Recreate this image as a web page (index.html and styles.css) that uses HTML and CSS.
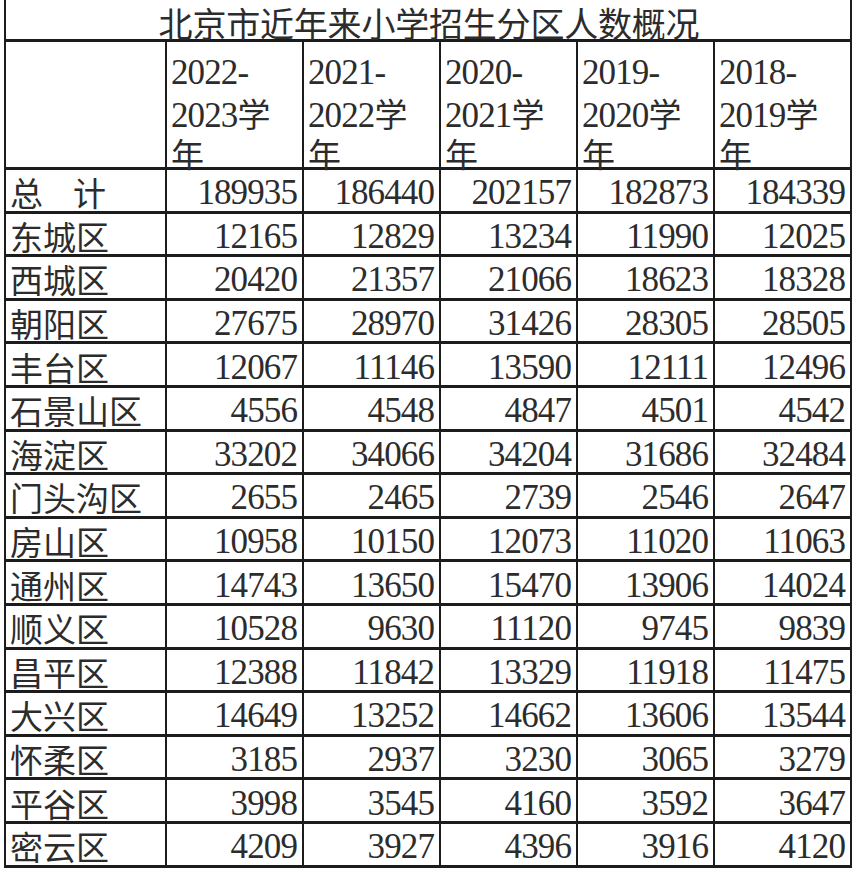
FILE: index.html
```html
<!DOCTYPE html>
<html>
<head>
<meta charset="utf-8">
<title>北京市近年来小学招生分区人数概况</title>
<link rel="stylesheet" href="styles.css">
</head>
<body>
<div class="sheet">
  <div class="title">北京市近年来小学招生分区人数概况</div>

  <div class="cell head"></div>
  <div class="cell head"><span class="ln lat">2022-</span><span class="ln"><span class="lat">2023</span>学</span><span class="ln">年</span></div>
  <div class="cell head"><span class="ln lat">2021-</span><span class="ln"><span class="lat">2022</span>学</span><span class="ln">年</span></div>
  <div class="cell head"><span class="ln lat">2020-</span><span class="ln"><span class="lat">2021</span>学</span><span class="ln">年</span></div>
  <div class="cell head"><span class="ln lat">2019-</span><span class="ln"><span class="lat">2020</span>学</span><span class="ln">年</span></div>
  <div class="cell head"><span class="ln lat">2018-</span><span class="ln"><span class="lat">2019</span>学</span><span class="ln">年</span></div>

  <div class="cell name"><span class="spread">总</span>计</div>
  <div class="cell num">189935</div><div class="cell num">186440</div><div class="cell num">202157</div><div class="cell num">182873</div><div class="cell num">184339</div>

  <div class="cell name">东城区</div>
  <div class="cell num">12165</div><div class="cell num">12829</div><div class="cell num">13234</div><div class="cell num">11990</div><div class="cell num">12025</div>

  <div class="cell name">西城区</div>
  <div class="cell num">20420</div><div class="cell num">21357</div><div class="cell num">21066</div><div class="cell num">18623</div><div class="cell num">18328</div>

  <div class="cell name">朝阳区</div>
  <div class="cell num">27675</div><div class="cell num">28970</div><div class="cell num">31426</div><div class="cell num">28305</div><div class="cell num">28505</div>

  <div class="cell name">丰台区</div>
  <div class="cell num">12067</div><div class="cell num">11146</div><div class="cell num">13590</div><div class="cell num">12111</div><div class="cell num">12496</div>

  <div class="cell name">石景山区</div>
  <div class="cell num">4556</div><div class="cell num">4548</div><div class="cell num">4847</div><div class="cell num">4501</div><div class="cell num">4542</div>

  <div class="cell name">海淀区</div>
  <div class="cell num">33202</div><div class="cell num">34066</div><div class="cell num">34204</div><div class="cell num">31686</div><div class="cell num">32484</div>

  <div class="cell name">门头沟区</div>
  <div class="cell num">2655</div><div class="cell num">2465</div><div class="cell num">2739</div><div class="cell num">2546</div><div class="cell num">2647</div>

  <div class="cell name">房山区</div>
  <div class="cell num">10958</div><div class="cell num">10150</div><div class="cell num">12073</div><div class="cell num">11020</div><div class="cell num">11063</div>

  <div class="cell name">通州区</div>
  <div class="cell num">14743</div><div class="cell num">13650</div><div class="cell num">15470</div><div class="cell num">13906</div><div class="cell num">14024</div>

  <div class="cell name">顺义区</div>
  <div class="cell num">10528</div><div class="cell num">9630</div><div class="cell num">11120</div><div class="cell num">9745</div><div class="cell num">9839</div>

  <div class="cell name">昌平区</div>
  <div class="cell num">12388</div><div class="cell num">11842</div><div class="cell num">13329</div><div class="cell num">11918</div><div class="cell num">11475</div>

  <div class="cell name">大兴区</div>
  <div class="cell num">14649</div><div class="cell num">13252</div><div class="cell num">14662</div><div class="cell num">13606</div><div class="cell num">13544</div>

  <div class="cell name">怀柔区</div>
  <div class="cell num">3185</div><div class="cell num">2937</div><div class="cell num">3230</div><div class="cell num">3065</div><div class="cell num">3279</div>

  <div class="cell name">平谷区</div>
  <div class="cell num">3998</div><div class="cell num">3545</div><div class="cell num">4160</div><div class="cell num">3592</div><div class="cell num">3647</div>

  <div class="cell name">密云区</div>
  <div class="cell num">4209</div><div class="cell num">3927</div><div class="cell num">4396</div><div class="cell num">3916</div><div class="cell num">4120</div>
</div>
</body>
</html>
```

FILE: styles.css
```css
html, body {
  margin: 0;
  padding: 0;
  background: #ffffff;
}

body {
  font-family: "Noto Sans CJK SC", sans-serif;
  color: #2c2c2c;
}

.sheet {
  margin-left: 4px;
  width: 848px;
  display: grid;
  grid-template-columns: 161px repeat(5, 137px);
  grid-template-rows: 42px 128px;
  grid-auto-rows: 43.6px;
  border-left: 2px solid #1c1c1c;
}

.title {
  grid-column: 1 / -1;
  box-sizing: border-box;
  border-right: 2px solid #1c1c1c;
  border-bottom: 3px solid #1c1c1c;
  text-align: center;
  font-size: 34px;
  line-height: 32px;
  padding-top: 7px;
  padding-left: 2px;
  letter-spacing: -0.2px;
  white-space: nowrap;
}

.cell {
  box-sizing: border-box;
  border-right: 2px solid #1c1c1c;
  border-bottom: 3px solid #1c1c1c;
  font-size: 33px;
  white-space: nowrap;
}

.head {
  padding: 11px 0 0 4px;
}

.ln {
  display: block;
  height: 40px;
  line-height: 40px;
}

.lat {
  font-family: "Liberation Serif", "Times New Roman", serif;
  font-size: 35px;
  letter-spacing: -0.9px;
}

.name {
  display: flex;
  align-items: center;
  padding: 4px 0 0 4px;
}

.num {
  display: flex;
  align-items: center;
  justify-content: flex-end;
  padding: 6px 5px 0 0;
  font-family: "Liberation Serif", "Times New Roman", serif;
  font-size: 35px;
  letter-spacing: -0.9px;
}

.spread {
  margin-right: 30px;
}
```
